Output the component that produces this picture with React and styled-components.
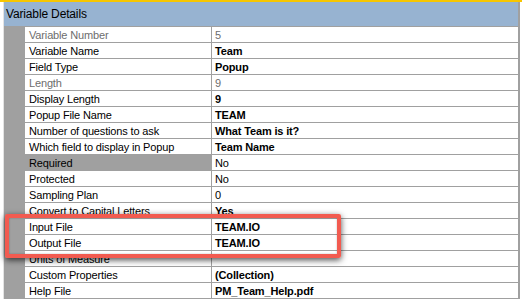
// Imports
import React from "react";
import styled, { createGlobalStyle } from "styled-components";

// Data
const rows = [
	{ label: "Variable Number", value: "5", muted: true },
	{ label: "Variable Name", value: "Team", bold: true },
	{ label: "Field Type", value: "Popup", bold: true },
	{ label: "Length", value: "9", muted: true },
	{ label: "Display Length", value: "9", bold: true },
	{ label: "Popup File Name", value: "TEAM", bold: true },
	{ label: "Number of questions to ask", value: "What Team is it?", bold: true },
	{ label: "Which field to display in Popup", value: "Team Name", bold: true },
	{ label: "Required", value: "No", selected: true },
	{ label: "Protected", value: "No" },
	{ label: "Sampling Plan", value: "0" },
	{ label: "Convert to Capital Letters", value: "Yes", bold: true },
	{ label: "Input File", value: "TEAM.IO", bold: true },
	{ label: "Output File", value: "TEAM.IO", bold: true },
	{ label: "Units of Measure", value: "" },
	{ label: "Custom Properties", value: "(Collection)", bold: true },
	{ label: "Help File", value: "PM_Team_Help.pdf", bold: true },
];

// Component
const App = () => {
	return(
		<>
			<GlobalStyle/>
			<Page>
				<TopStripe/>
				<Panel>
					<Header>Variable Details</Header>
					<Body>
						<Gutter/>
						<Grid>
							{ rows.map((row, i) => (
								<React.Fragment key={ i }>
									<Label $muted={ row.muted } $selected={ row.selected }>{ row.label }</Label>
									<Value $muted={ row.muted } $bold={ row.bold }>{ row.value }</Value>
								</React.Fragment>
							)) }
						</Grid>
					</Body>
				</Panel>
				<Highlight/>
			</Page>
		</>
	);
};

// Styled
const GlobalStyle = createGlobalStyle`
	html, body {
		margin: 0;
		padding: 0;
		background: #ffffff;
	}
	body {
		font-family: "Liberation Sans", Arial, sans-serif;
	}
`;

const Page = styled.div`
	position: relative;
	width: 522px;
	height: 305px;
	overflow: hidden;
	background: #ffffff;
	display: flex;
	flex-direction: column;
`;

const TopStripe = styled.div`
	height: 2px;
	background: #f7c600;
	flex-shrink: 0;
`;

const Panel = styled.div`
	margin-left: 3px;
	width: 514px;
	border-right: 2px solid #a0a0a0;
	border-left: 1px solid #e3e3e3;
	display: flex;
	flex-direction: column;
`;

const Header = styled.div`
	height: 24px;
	background: #97b3d1;
	border-bottom: 1px solid #a0a0a0;
	display: flex;
	align-items: center;
	padding-left: 2px;
	font-size: 12px;
	letter-spacing: -0.15px;
	color: #000000;
`;

const Body = styled.div`
	display: flex;
`;

const Gutter = styled.div`
	width: 21px;
	background: #a0a0a0;
	flex-shrink: 0;
`;

const Grid = styled.div`
	flex: 1;
	display: grid;
	grid-template-columns: 187px 1fr;
	grid-auto-rows: 16px;
`;

const Cell = styled.div`
	border-bottom: 1px solid #a0a0a0;
	display: flex;
	align-items: center;
	font-size: 11px;
	letter-spacing: -0.15px;
	white-space: nowrap;
	overflow: hidden;
	padding-left: 4px;
	padding-top: 1px;
`;

const Label = styled(Cell)`
	border-right: 1px solid #a0a0a0;
	background: ${ (p) => p.$selected ? '#a0a0a0' : '#ffffff' };
	color: ${ (p) => p.$muted ? '#6d6d6d' : '#000000' };
`;

const Value = styled(Cell)`
	padding-left: 3px;
	background: #ffffff;
	color: ${ (p) => p.$muted ? '#6d6d6d' : '#000000' };
	font-weight: ${ (p) => p.$bold ? 700 : 400 };
`;

const Highlight = styled.div`
	position: absolute;
	left: 5px;
	top: 214px;
	width: 328px;
	height: 36px;
	border: 4px solid #f25b50;
	border-radius: 2px;
	box-shadow: 0 2px 6px rgba(0,0,0,0.7), inset 0 0 2px rgba(0,0,0,0.3);
	pointer-events: none;
`;

// Export
export default App;
